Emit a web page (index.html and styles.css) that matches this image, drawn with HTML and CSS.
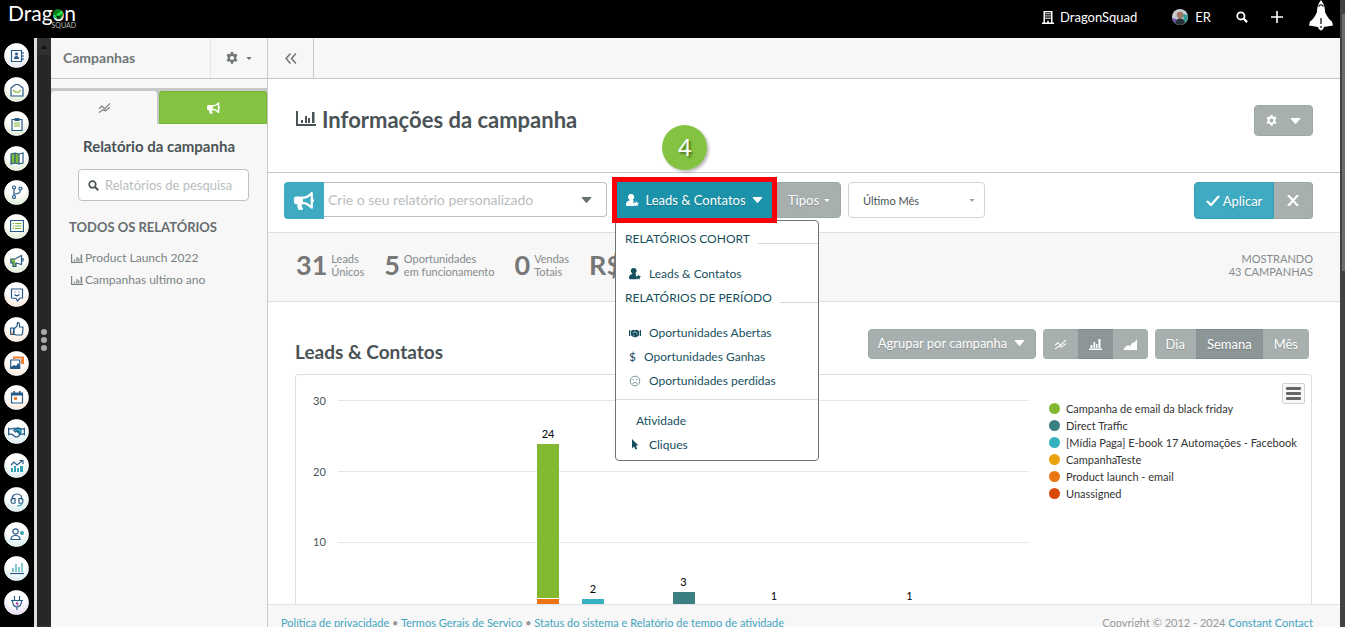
FILE: index.html
```html
<!DOCTYPE html>
<html lang="pt-BR">
<head>
<meta charset="utf-8">
<meta name="viewport" content="width=device-width, initial-scale=1">
<title>Informações da campanha</title>
<link rel="stylesheet" href="styles.css">
</head>
<body>
<svg class="sprite" aria-hidden="true">
  <symbol id="i-bars" viewBox="0 0 20 15"><path d="M0 0h2v13h18v2H0z"/><path d="M5 9h2v3H5zM9 5h2v7H9zM12 7h2v5h-2zM16 1h2.500v11H16z"/></symbol>
  <symbol id="i-horn" viewBox="0 0 576 512"><path d="M576 240c0-23.630-12.950-44.040-32-55.120V32.010C544 23.260 537.020 0 512 0c-7.120 0-14.190 2.380-19.980 7.020l-85.030 68.030C364.280 109.190 310.660 128 256 128H64c-35.350 0-64 28.650-64 64v96c0 35.350 28.650 64 64 64h33.700c-1.390 10.480-2.180 21.140-2.180 32 0 39.770 9.260 77.350 25.560 110.940 5.190 10.690 16.520 17.060 28.400 17.060h74.280c26.050 0 41.690-29.840 25.900-50.560-16.400-21.520-26.150-48.360-26.150-77.440 0-11.110 1.620-21.790 4.410-32H256c54.660 0 108.280 18.810 150.980 52.950l85.030 68.030a32.023 32.023 0 0 0 19.980 7.020c24.920 0 32-22.780 32-32V295.130C563.050 284.040 576 263.630 576 240zm-96 141.420l-33.050-26.440C392.950 311.780 325.120 288 256 288v-96c69.120 0 136.950-23.780 190.950-66.980L480 98.580v282.840z"/></symbol>
  <symbol id="i-gear" viewBox="0 0 16 16"><path fill-rule="evenodd" d="M6.500 0h3l.5 2.200 1.500.8 2.200-.8 1.500 2.600L13.600 7v2l1.600 1.400-1.500 2.600-2.200-.8-1.500.9-.5 2.400h-3L6 13.100l-1.500-.9-2.200.8-1.500-2.600L2.400 9V7L.8 4.800l1.500-2.600 2.200.8L6 2.200zM8 5.200a2.800 2.800 0 1 0 0 5.600 2.800 2.800 0 0 0 0-5.600z"/></symbol>
  <symbol id="i-search" viewBox="0 0 16 16"><circle cx="6.500" cy="6.500" r="4.800" fill="none" stroke="currentColor" stroke-width="2.400"/><path d="M10 10l4.800 4.800" stroke="currentColor" stroke-width="3"/></symbol>
  <symbol id="i-line" viewBox="0 0 14 12"><path d="M1 7l3-3 3 3 6-6M1 11l4-3 3 1 5-4" fill="none" stroke="currentColor" stroke-width="1.200"/></symbol>
  <symbol id="i-caret" viewBox="0 0 12 7"><path d="M.5 0h11q.5.500 0 1L6.600 6.600h-1.200L.5 1Q0 .5.500 0z"/></symbol>
  <symbol id="i-user" viewBox="0 0 14 14"><path d="M5.500 0a3.200 3.200 0 0 1 2 5.800Q7.200 7 8.500 7.400l-.7 2 1.500 1.500-.3 2.100H1q-1-.2-1-1.500Q0 7.500 3.600 7.200 4 6.500 3.500 5.800A3.200 3.200 0 0 1 5.500 0z"/><path d="M11 7.500l.9 1.900 2.100.3-1.500 1.500.3 2.100-1.800-1-1.900 1 .4-2.100L8 9.700l2.100-.3z"/></symbol>
  <symbol id="i-building" viewBox="0 0 12 14"><path fill-rule="evenodd" d="M1.500 1h9v11.500H12V14H0v-1.500h1.500zM3 2.300v10.200h2.200v-1.800h1.600v1.800H9V2.300z"/><path d="M3.500 3h1.300v1.300H3.500zM5.400 3h1.300v1.300H5.400zM7.300 3h1.300v1.300H7.300zM3.500 5.300h1.300v1.300H3.500zM5.400 5.300h1.300v1.300H5.400zM7.300 5.300h1.300v1.300H7.300zM3.500 7.600h1.300v1.300H3.500zM5.400 7.600h1.300v1.300H5.400zM7.300 7.600h1.300v1.300H7.300z"/></symbol>
  <symbol id="i-shake" viewBox="0 0 14 10"><path d="M0 1h1.400v7H0zM12.600 1H14v7h-1.400zM2.200 2L5 .5l2 .7L9 .5l2.800 1.500v5L8.500 9.500h-3L2.200 7z"/><path d="M4.500 4.500L7 2.800l3 2.700M5 7l1.500 1" stroke="#fff" fill="none" stroke-width=".8"/></symbol>
</svg>

<header class="topbar">
  <a class="logo" href="#" aria-label="Dragon Squad">Drag<span class="logo-o">o<svg viewBox="0 0 8 8"><circle cx="4" cy="4" r="4" fill="#087c22"/><path d="M0 5Q3 5 7 1q1 2 .8 3.500Q6 3 3 7.800z" fill="#22e04c"/><path d="M2 5l4 1-2 2z" fill="#012c0b"/></svg></span>n<small>SQUAD</small></a>
  <nav class="topnav" aria-label="Conta">
    <a href="#" class="account"><svg width="12" height="14"><use href="#i-building"/></svg>DragonSquad</a>
    <a href="#" class="profile"><svg width="16" height="16" viewBox="0 0 16 16"><circle cx="8" cy="8" r="8" fill="#c6cbd2"/><path d="M0 9l4 1 2 5.500Q1 14 0 9z" fill="#7552b8"/><path d="M11 5l4.600 1Q16.500 11 12 14.500z" fill="#2c9c95"/><circle cx="8" cy="6" r="3.300" fill="#a17863"/><path d="M3 14q1-4 4-4.500h2.500q3 1 3.500 4.500-5 4-10 0z" fill="#27303b"/></svg>ER</a>
    <button class="plain" aria-label="Pesquisar"><svg width="12" height="12"><use href="#i-search"/></svg></button>
    <button class="plain" aria-label="Adicionar"><svg width="12" height="12" viewBox="0 0 12 12"><path d="M6 0v12M0 6h12" stroke="currentColor" stroke-width="1.600"/></svg></button>
    <button class="plain shuttle" aria-label="Novidades"><svg width="24" height="31" viewBox="0 0 24 31"><path d="M12 0q4 5 4 12 3 7 7 9.500l1 4-9 1.500-1 2.500h-1L12 31l-1-1.500h-1L9 27l-9-1.500 1-4Q5 19 8 12q0-7 4-12z"/><path d="M9.500 6.500q2.500-3.500 5 0M12 18v6M12 26v2" fill="none" stroke="#000" stroke-width="1.200"/></svg></button>
  </nav>
</header>

<div class="shell">
  <nav class="rail" aria-label="Módulos">
    <a href="#" class="blue" aria-label="Contatos"><svg viewBox="0 0 14 14"><path d="M1.500 1.500h10v11h-10z"/><path class="s" d="M13 3v2M13 6v2M13 9v2"/><path class="f" d="M4 10q0-3 2.500-3T9 10z"/><circle class="f" cx="6.500" cy="5" r="1.600"/></svg></a>
    <a href="#" class="green" aria-label="E-mail"><svg viewBox="0 0 14 14"><path d="M1 5l4.500-3.500h3L13 5v8H1z"/><path class="s" d="M3 7l2.500 2.200h3L11 7"/></svg></a>
    <a href="#" class="green" aria-label="Formulários"><svg viewBox="0 0 14 14"><path d="M2 2.500h10v11H2z"/><path class="t" d="M4 5h6v5H4z" opacity=".5"/><path class="f" d="M4.500 1h5v3h-5z"/></svg></a>
    <a href="#" class="green" aria-label="Páginas"><svg viewBox="0 0 14 14"><path class="t" d="M1 3l4-1v10l-4 1zM5 2l4 1v10l-4-1z"/><path d="M1 3l4-1 4 1 4-1v10l-4 1-4-1-4 1zM5 2v10M9 3v10"/></svg></a>
    <a href="#" class="green" aria-label="Automações"><svg viewBox="0 0 14 14"><path d="M4 4v7M4 9q7 0 6-4"/><circle cx="4" cy="2.500" r="1.500"/><circle cx="10.500" cy="3.500" r="1.500"/><circle cx="4" cy="12" r="1.500"/></svg></a>
    <a href="#" class="green" aria-label="Listas"><svg viewBox="0 0 14 14"><path d="M.5 1.500h13v11H.5z"/><path class="s" d="M5 4.500h6.500M5 7h6.500M5 9.500h6.500M2.500 4.500H4M2.500 7H4M2.500 9.500H4"/></svg></a>
    <a href="#" class="green" aria-label="Campanhas"><svg viewBox="0 0 14 14"><path class="t" d="M1 5h4v4h1v3H3V9H1z"/><path d="M.8 5H5l6.500-3.500v9L6 9v3.500H3V9H.8zM13 4v3.500"/></svg></a>
    <a href="#" class="orange" aria-label="Conversas"><svg viewBox="0 0 14 14"><path d="M1.500 1h11v9H10l-2.500 3L6 10.500 1.500 10zM4.500 6.500q2.500 2.500 5 0M4.500 4h1M8.500 4h1"/></svg></a>
    <a href="#" class="orange" aria-label="Social"><svg viewBox="0 0 14 14"><path d="M.7 6h2.800v6.500H.7zM4 7l3-3 .5-3.300q2 0 2 2V5H13l-.5 7-1 1H6L4 12z"/><path class="s" d="M2 10v2"/></svg></a>
    <a href="#" class="orange" aria-label="Anúncios"><svg viewBox="0 0 14 14"><path class="s" stroke-width="2" d="M4 3V1.500h9.500V8M12 3v5"/><path d="M.7 4h9v8.500h-9z"/><path class="f" d="M1 11l3-2 2 1 2-3 2 3v2H1z"/></svg></a>
    <a href="#" class="orange" aria-label="Calendário"><svg viewBox="0 0 14 14"><path d="M1.500 3h11v10h-11z"/><path class="f" d="M2 3h10v2.500H2zM3.500 1H5v3H3.500zM9 1h1.500v3H9z"/><path class="t" d="M4 7h3v3H4z"/></svg></a>
    <a href="#" class="teal" aria-label="Negócios"><svg class="wide" viewBox="0 0 16 12"><path class="t" d="M6 3l4-1 3 1v4l-2 2-4-4z"/><path d="M.6 2v7M15.400 2v7M1 3h3l3-1M15 3h-3L9 2 5.500 4.500 7 6l2-1 3 3-3 2.500H7L3.500 8H1M12 8h3"/></svg></a>
    <a href="#" class="teal" aria-label="Funil"><svg viewBox="0 0 14 14"><path d="M1 6l3-3 3 3 5-4M9.500 1.500H13V5"/><path class="t" d="M1 9h2v4H1zM4 7h2v6H4zM7 9h2v4H7zM10 7h3v6h-3z"/></svg></a>
    <a href="#" class="teal" aria-label="Atendimento"><svg viewBox="0 0 14 14"><path d="M2 7q0-6 5-6t5 6M5 5.500Q1 5 1 8t4 2zM9 5.500q4-.5 4 2.500t-4 2z"/><path class="s" d="M12 10q0 3-5 3"/></svg></a>
    <a href="#" class="teal" aria-label="Usuários"><svg viewBox="0 0 14 14"><circle cx="5.500" cy="4.500" r="2.700"/><path d="M1 12.500q0-4 4.500-4t4.500 4z"/><circle class="t" cx="12" cy="6" r="2"/></svg></a>
    <a href="#" class="teal" aria-label="Relatórios"><svg viewBox="0 0 14 14"><path d="M0 12.500h14"/><path class="s" d="M3 11V7M6 11V3M9 11V6M12 11V2"/></svg></a>
    <a href="#" class="violet" aria-label="Integrações"><svg viewBox="0 0 14 14"><path d="M4.500 0v4M9.500 0v4M1 4.500h12M2.500 4.500q0 6 4.500 6.500 4.500-.5 4.500-6.500M7 11v3"/><path class="t" d="M7.500 5L5.500 8H7l-.5 2.500L9 7.500H7.500z"/></svg></a>
  </nav>
  <div class="gutter"><i class="up"></i><span class="grip"><i></i><i></i><i></i></span></div>

  <aside class="sidebar">
    <div class="side-head">
      <h2>Campanhas</h2>
      <button class="plain" aria-label="Opções"><svg width="12" height="12"><use href="#i-gear"/></svg><svg width="6" height="3"><use href="#i-caret"/></svg></button>
    </div>
    <div class="tabs">
      <button aria-label="Gráficos"><svg width="13" height="12"><use href="#i-line"/></svg></button>
      <button class="on" aria-label="Campanhas"><svg width="13" height="12"><use href="#i-horn"/></svg></button>
    </div>
    <h3>Relatório da campanha</h3>
    <label class="search"><svg width="11" height="11"><use href="#i-search"/></svg><input type="text" placeholder="Relatórios de pesquisa" aria-label="Relatórios de pesquisa"></label>
    <h4>TODOS OS RELATÓRIOS</h4>
    <ul class="reports">
      <li><a href="#"><svg width="12" height="9"><use href="#i-bars"/></svg>Product Launch 2022</a></li>
      <li><a href="#"><svg width="12" height="9"><use href="#i-bars"/></svg>Campanhas ultimo ano</a></li>
    </ul>
  </aside>

  <main class="main">
    <div class="crumb"><button class="plain" aria-label="Recolher"><svg width="12" height="11" viewBox="0 0 11 10"><path d="M5 .5L1 5l4 4.500M10 .5L6 5l4 4.500" fill="none" stroke="currentColor" stroke-width="1.400"/></svg></button></div>

    <div class="title">
      <h1><svg width="20" height="15"><use href="#i-bars"/></svg>Informações da campanha</h1>
      <button class="btn settings" aria-label="Configurações"><svg width="11" height="11"><use href="#i-gear"/></svg><svg width="11" height="6"><use href="#i-caret"/></svg></button>
    </div>

    <div class="filters">
      <div class="custom">
        <span class="tag"><svg width="20" height="18"><use href="#i-horn"/></svg></span>
        <input type="text" placeholder="Crie o seu relatório personalizado" aria-label="Relatório personalizado">
        <svg class="arrow" width="11" height="6"><use href="#i-caret"/></svg>
      </div>
      <div class="types">
        <button class="btn leads"><svg width="13" height="13"><use href="#i-user"/></svg>Leads &amp; Contatos<svg width="11" height="6"><use href="#i-caret"/></svg></button>
        <button class="btn kinds">Tipos<svg width="6" height="3"><use href="#i-caret"/></svg></button>
        <span class="frame"></span>
        <span class="step">4</span>
        <div class="menu">
          <p>RELATÓRIOS COHORT</p>
          <a href="#"><svg width="12" height="12"><use href="#i-user"/></svg>Leads &amp; Contatos</a>
          <p>RELATÓRIOS DE PERÍODO</p>
          <a href="#"><svg width="12" height="9"><use href="#i-shake"/></svg>Oportunidades Abertas</a>
          <a href="#" class="money"><b>$</b>Oportunidades Ganhas</a>
          <a href="#"><svg class="sad" width="12" height="12" viewBox="0 0 12 12"><circle cx="6" cy="6" r="4.800"/><path d="M3.500 8.500q2.500-2.500 5 0M4.200 4v1.200M7.800 4v1.200"/></svg>Oportunidades perdidas</a>
          <hr>
          <a href="#" class="flat">Atividade</a>
          <a href="#"><svg width="12" height="12" viewBox="0 0 12 12"><path d="M3 0l6.500 6.500H6.800l1.400 3.200-1.700.8L5 7.500 3 9.500z"/></svg>Cliques</a>
        </div>
      </div>
      <span class="period"><select aria-label="Período"><option>Último Mês</option></select><svg width="6" height="3"><use href="#i-caret"/></svg></span>
      <div class="apply">
        <button class="btn go"><svg width="14" height="11" viewBox="0 0 14 11"><path d="M1 6l4 4 8-9" fill="none" stroke="currentColor" stroke-width="2.300"/></svg>Aplicar</button>
        <button class="btn clear" aria-label="Limpar"><svg width="12" height="11" viewBox="0 0 12 11"><path d="M1 0l10 11M11 0L1 11" stroke="currentColor" stroke-width="2.200"/></svg></button>
      </div>
    </div>

    <div class="stats">
      <div><strong>31</strong><span>Leads<br>Únicos</span></div>
      <div><strong>5</strong><span>Oportunidades<br>em funcionamento</span></div>
      <div><strong>0</strong><span>Vendas<br>Totais</span></div>
      <div><strong>R$</strong></div>
      <p>MOSTRANDO<br>43 CAMPANHAS</p>
    </div>

    <section class="report">
      <div class="report-head">
        <h2>Leads &amp; Contatos</h2>
        <button class="btn group-by">Agrupar por campanha<svg width="11" height="6"><use href="#i-caret"/></svg></button>
        <div class="seg icons">
          <button class="btn" aria-label="Linhas"><svg width="13" height="11"><use href="#i-line"/></svg></button>
          <button class="btn on" aria-label="Colunas"><svg width="13" height="11" viewBox="0 0 13 11"><path d="M0 9.500h13V11H0zM1.500 6h2v3h-2zM4.500 3h1.700v6H4.500zM7 5h1.500v4H7zM9.500 0h2v9h-2z"/></svg></button>
          <button class="btn" aria-label="Área"><svg width="13" height="11" viewBox="0 0 13 11"><path d="M0 11V9l4-3 2 1 3-4 1 1 3-4v11z"/></svg></button>
        </div>
        <div class="seg"><button class="btn">Dia</button><button class="btn on">Semana</button><button class="btn">Mês</button></div>
      </div>
      <div class="chart">
        <div class="axis"><span>30</span><span>20</span><span>10</span></div>
        <div class="plot">
          <div class="bar" style="left:30.4%"><span>24</span><i class="c1" style="height:154px"></i><i class="c5" style="height:14px"></i></div>
          <div class="bar" style="left:36.9%"><span>2</span><i class="c3" style="height:14px"></i></div>
          <div class="bar" style="left:50%"><span>3</span><i class="c2" style="height:21px"></i></div>
          <div class="bar" style="left:63.1%"><span>1</span><i class="c3" style="height:7px"></i></div>
          <div class="bar" style="left:82.700%"><span>1</span><i class="c3" style="height:7px"></i></div>
        </div>
        <div class="key">
          <button aria-label="Menu do gráfico"><i></i><i></i><i></i></button>
          <ul>
            <li><i class="c1"></i>Campanha de email da black friday</li>
            <li><i class="c2"></i>Direct Traffic</li>
            <li><i class="c3"></i>[Mídia Paga] E-book 17 Automações - Facebook</li>
            <li><i class="c4"></i>CampanhaTeste</li>
            <li><i class="c5"></i>Product launch - email</li>
            <li><i class="c6"></i>Unassigned</li>
          </ul>
        </div>
      </div>
    </section>

    <footer class="footer">
      <p><a href="#">Política de privacidade</a> • <a href="#">Termos Gerais de Serviço</a> • <a href="#">Status do sistema e Relatório de tempo de atividade</a></p>
      <p>Copyright © 2012 - 2024 <a href="#">Constant Contact</a></p>
    </footer>
  </main>
</div>
<div class="scroll"><i></i></div>
</body>
</html>
```
FILE: styles.css
```css
* { box-sizing: border-box; }
body, h1, h2, h3, h4, p, ul { margin: 0; padding: 0; }
body {
  height: 100vh;
  display: grid;
  grid-template: 38px minmax(0, 1fr) / minmax(0, 1fr) 5px;
  overflow: hidden;
  font-family: Lato, sans-serif;
  font-size: 13px;
  color: #4a5356;
  background: #fff;
}
ul { list-style: none; }
a { color: inherit; text-decoration: none; }
svg { fill: currentColor; flex: none; display: block; }
button, input, select { font: inherit; color: inherit; }
button { cursor: pointer; }
.sprite { position: absolute; width: 0; height: 0; }
.plain { border: 0; background: none; padding: 0; display: flex; align-items: center; justify-content: center; }

/* Top bar */
.topbar { background: #000; color: #fff; display: flex; justify-content: space-between; padding-left: 8px; }
.logo { position: relative; align-self: flex-start; font-size: 21px; line-height: 26px; }
.logo-o { position: relative; }
.logo-o svg { position: absolute; left: 1px; top: 9px; width: 10px; height: 10px; }
.logo small { position: absolute; right: 0; top: 21px; font-size: 7px; line-height: 9px; color: #bbb; }
.topnav { display: flex; align-items: center; height: 34px; font-size: 13px; line-height: 16px; }
.topnav a { display: flex; align-items: center; gap: 6px; }
.topnav .profile { margin: 0 25px 0 35px; gap: 7px; }
.topnav .plain + .plain { margin-left: 23px; }
.topnav .plain.shuttle { align-self: flex-start; margin: 0 7px 0 26px; }
.scroll { grid-row: 1 / 3; grid-column: 2; background: #424242; padding: 14px 0 0 2px; }
.scroll i { display: block; height: 257px; background: #6b6b6b; }

/* Shell */
.shell { display: flex; min-height: 0; grid-column: 1; grid-row: 2; }
.rail { width: 34px; background: #000; display: flex; flex-direction: column; justify-content: space-between; padding: 5px 0 12px 4px; }
.rail a { width: 25px; height: 25px; border-radius: 50%; display: grid; place-items: center; border: 1px solid #fff; }
.rail svg { width: 14px; height: 14px; fill: none; stroke: #285b86; stroke-width: 1.2; }
.rail .wide { width: 17px; }
.rail .f { fill: #285b86; stroke: none; }
.rail .t { fill: var(--tone); stroke: none; }
.rail .s { stroke: var(--tone); }
.blue { --tone: #285b86; background: radial-gradient(circle at 50% 30%, #fff 45%, #d5d8e8); }
.green { --tone: #7fba3b; background: radial-gradient(circle at 50% 30%, #fff 45%, #cde3b8); }
.orange { --tone: #f08030; background: radial-gradient(circle at 50% 30%, #fff 45%, #fbdcc4); }
.teal { --tone: #35a3b5; background: radial-gradient(circle at 50% 30%, #fff 45%, #bfe2e8); }
.violet { --tone: #8b1d92; background: radial-gradient(circle at 50% 30%, #fff 45%, #d6c6f0); }
.gutter { width: 17px; border-left: 3px solid #dedede; background: #272727; display: flex; flex-direction: column; align-items: center; justify-content: space-between; }
.gutter .up { width: 14px; height: 17px; background: #303030; display: grid; place-items: center; }
.gutter .up::after { content: ""; border: 3px solid transparent; border-bottom: 4px solid #111; border-top: 0; }
.gutter::after { content: ""; width: 14px; height: 2px; background: #303030; }
.grip { display: grid; gap: 2px; }
.grip i { width: 6px; height: 6px; border-radius: 50%; background: #aaa; }

/* Sidebar */
.sidebar { width: 217px; background: #f7f7f7; border-right: 1px solid #c8c8c8; }
.side-head { display: flex; height: 41px; border-bottom: 1px solid #c8c8c8; color: #707677; }
.side-head h2 { flex: 1; padding-left: 12px; font-size: 14px; line-height: 39px; }
.side-head .plain { width: 57px; border-left: 1px solid #e4e4e4; gap: 8px; }
.tabs { display: grid; grid-template-columns: 106px 1fr; gap: 2px; margin-top: 9px; padding-top: 3px; background: #c8c8c8; }
.tabs button { height: 33px; border: 0; border-radius: 4px 4px 0 0; background: #f7f7f7; display: grid; place-items: center; color: #777; }
.tabs .on { background: #84c341; color: #fff; box-shadow: inset 0 0 0 1px #78b539; }
.sidebar h3 { margin-top: 12px; text-align: center; font-size: 15px; line-height: 21px; }
.search { display: flex; align-items: center; gap: 6px; margin: 12px 18px 0 27px; height: 32px; padding: 0 9px; border: 1px solid #b9c3c4; border-radius: 4px; background: #fff; }
.search input { border: 0; outline: 0; background: none; width: 100%; min-width: 0; padding: 0; font-size: 13px; }
input::placeholder { color: #b9bdbe; opacity: 1; }
.sidebar h4 { margin: 16px 0 10px 18px; font-size: 13px; line-height: 20px; color: #666e70; }
.reports { padding-left: 20px; font-size: 12px; line-height: 22px; color: #7b8485; }
.reports a { display: flex; align-items: center; gap: 2px; }

/* Main column */
.main { flex: 1; min-width: 0; display: flex; flex-direction: column; }
.crumb { height: 41px; flex: none; background: #f7f7f7; border-bottom: 1px solid #c8c8c8; display: flex; color: #707677; }
.crumb .plain { width: 46px; border-right: 1px solid #c8c8c8; }
.title { flex: none; height: 94px; display: flex; justify-content: space-between; padding: 26px 27px 0 28px; border-bottom: 1px solid #c8c8c8; }
h1 { display: flex; align-items: center; gap: 6px; height: 28px; font-size: 22px; }
h1 svg { margin-bottom: 2px; }
.btn { display: flex; align-items: center; justify-content: center; border: 1px solid #9ca7a6; background: #a7b0af; color: #fff; font-size: 13px; padding: 0; text-shadow: 0 1px 1px #00000030; }
.settings { width: 59px; height: 31px; border-radius: 4px; gap: 13px; }

.filters { flex: none; height: 60px; display: flex; align-items: flex-start; padding: 9px 27px 0 16px; border-bottom: 1px solid #dedede; }
.custom { position: relative; display: flex; width: 323px; }
.tag { width: 40px; height: 37px; display: grid; place-items: center; border-radius: 4px 0 0 4px; background: #3fabc3; color: #fff; }
.custom input { flex: 1; min-width: 0; height: 35px; border: 1px solid #b9c3c4; border-left: 0; border-radius: 0 4px 4px 0; padding: 0 30px 0 4px; font-size: 14px; }
.arrow { position: absolute; right: 15px; top: 15px; color: #66716f; }
.types { position: relative; display: flex; margin-left: 9px; z-index: 2; }
.leads { width: 161px; height: 36px; gap: 6px; padding-right: 4px; background: #1b93ab; border-color: #1b93ab; }
.kinds { width: 64px; height: 36px; gap: 5px; border-radius: 0 4px 4px 0; }
.frame { position: absolute; left: -4px; top: -5px; width: 165px; height: 46px; border: 5px solid #fb0007; z-index: 2; pointer-events: none; }
.step { position: absolute; left: 46px; top: -57px; width: 45px; height: 45px; border-radius: 50%; background: #84c341; color: #fff; font: 24px/44px "Open Sans", sans-serif; text-align: center; text-shadow: 2px 2px 2px #0006; box-shadow: 2px 2px 3px #0004; }
.menu { position: absolute; left: -1px; top: 38px; width: 204px; padding: 6px 0 3px; background: #fff; border: 1px solid #6f7374; border-radius: 4px; color: #17505d; font-size: 12px; line-height: 24px; }
.menu p { display: flex; gap: 8px; margin-bottom: 11px; padding-left: 9px; }
.menu p::after { content: ""; flex: 1; height: 16px; border-bottom: 1px solid #d4d4d4; }
.menu a { display: flex; align-items: center; gap: 8px; padding-left: 13px; }
.menu .money b { width: 7px; font-weight: 400; }
.menu .flat { padding-left: 20px; }
.menu hr { margin: 6px 0 9px; border: 0; border-top: 1px solid #dedede; }
.sad { fill: none; stroke: #7b9499; }
.period { position: relative; width: 137px; margin-left: 7px; }
.period select { appearance: none; width: 100%; height: 36px; padding: 0 14px; border: 1px solid #d0d4d4; border-radius: 4px; background: #fff; font-size: 11px; }
.period svg { position: absolute; right: 10px; top: 17px; color: #a3a9a9; }
.apply { display: flex; margin-left: auto; }
.go { width: 80px; height: 37px; gap: 3px; background: #3fabc3; border-color: #369eb5; border-radius: 4px 0 0 4px; }
.clear { width: 39px; height: 37px; border-left: 0; border-radius: 0 4px 4px 0; }

.stats { flex: none; height: 69px; display: flex; align-items: center; gap: 20px; padding: 0 27px 4px 28px; background: #f7f7f7; border-bottom: 1px solid #dedede; color: #858b8c; font-size: 11px; line-height: 13px; }
.stats div { display: flex; align-items: center; gap: 4px; }
.stats strong { font-size: 27px; line-height: 30px; color: #777; }
.stats p { margin-left: auto; text-align: right; }

/* Report */
.report { flex: 1; min-height: 0; padding: 27px 28px 0 27px; overflow: hidden; }
.report-head { display: flex; align-items: center; gap: 7px; padding-right: 3px; margin-bottom: 15px; }
.report-head h2 { flex: 1; padding-top: 16px; font-size: 19px; line-height: 14px; }
.report-head .btn { height: 30px; padding-bottom: 2px; }
.group-by { width: 168px; border-radius: 4px; gap: 7px; }
.seg { display: flex; }
.seg .btn { border-width: 1px 0; padding: 0 11px; }
.seg .btn:first-child { border-radius: 4px 0 0 4px; }
.seg .btn:last-child { border-radius: 0 4px 4px 0; }
.seg .on { background: #8c9696; border-color: #808b8b; }
.chart { display: flex; height: 340px; border: 1px solid #dedede; border-radius: 3px; padding: 0 6px 0 17px; }
.axis { width: 25px; padding-top: 16px; font-size: 11px; line-height: 20px; }
.axis span { display: block; margin-bottom: 51px; }
.axis span:nth-child(2) { margin-bottom: 50px; }
.plot { position: relative; flex: 1; margin-top: 25px; height: 213px; background: repeating-linear-gradient(#e6e6e6 0 1px, transparent 1px 71px); }
.bar { position: absolute; bottom: 0; width: 22px; margin-left: -11px; display: flex; flex-direction: column; gap: 1px; }
.bar span { text-align: center; font-size: 11px; line-height: 19px; color: #000; }
.bar i { display: block; }
.key { width: 276px; padding: 8px 0 0 20px; }
.key button { display: grid; gap: 2px; align-content: center; width: 23px; height: 21px; margin-left: auto; padding: 0 3px; border: 1px solid #d0d0d0; border-radius: 2px; background: #f7f7f7; }
.key button i { height: 3px; border-radius: 1px; background: #666; }
.key ul { margin-top: -4px; font-size: 11px; line-height: 17px; color: #333; }
.key li { display: flex; align-items: center; gap: 6px; white-space: nowrap; }
.key li i { flex: none; width: 11px; height: 11px; border-radius: 50%; }
.c1 { background: #82b930; }
.c2 { background: #3a8083; }
.c3 { background: #35b1c0; }
.c4 { background: #eba40f; }
.c5 { background: #eb7512; }
.c6 { background: #d94908; }

.footer { flex: none; height: 23px; display: flex; justify-content: space-between; overflow: hidden; padding: 0 27px 0 13px; border-top: 1px solid #e4e4e4; background: #f7f7f7; color: #999; font-size: 11px; line-height: 36px; }
.footer a { color: #44a6bf; }
```
